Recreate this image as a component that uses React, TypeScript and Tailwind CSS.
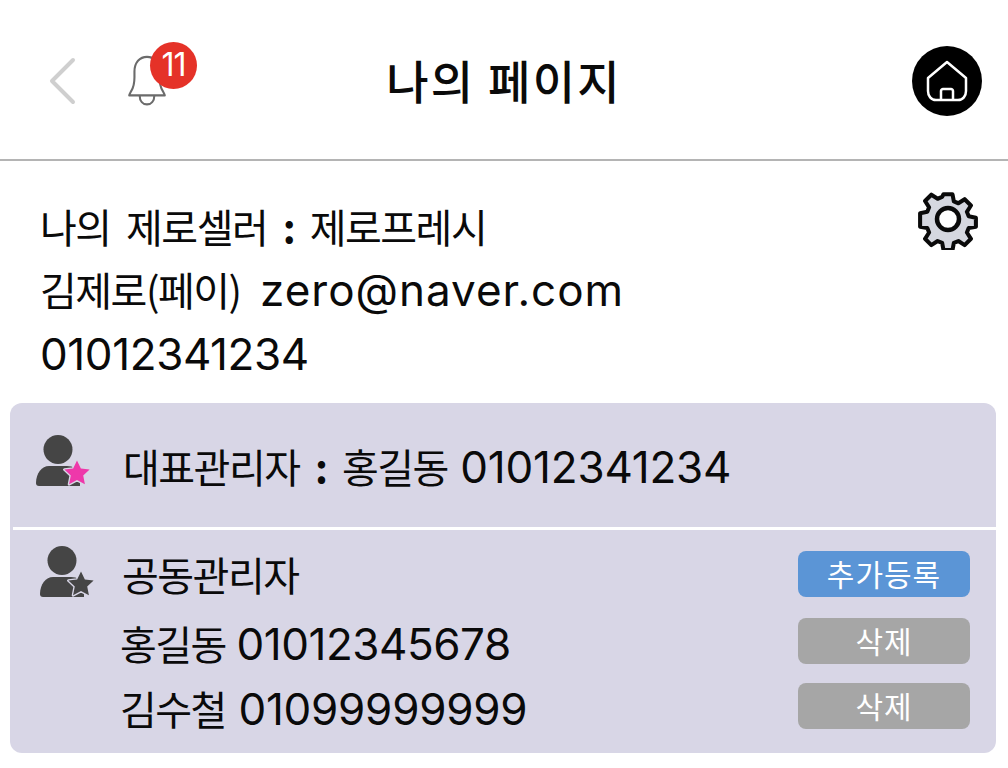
import React from 'react';

const FONT = "font-['Noto_Sans_CJK_KR',sans-serif]";

// latin and digits run larger than the hangul in the picture
const Num: React.FC<{ className?: string; children: React.ReactNode }> = ({ className, children }) => (
  <span className={`font-['Inter',sans-serif] text-[44px] font-normal [word-spacing:0] ${className || 'tracking-[-0.400px]'}`}>{children}</span>
);

const Colon = () => <span className="font-bold">:</span>;

const Bell = () => (
  <svg width="46" height="59" viewBox="0 0 44 52" preserveAspectRatio="none" fill="none" stroke="#6b6b6b" strokeWidth="2" strokeLinejoin="round" aria-hidden="true">
    <path d="M5 40c0-1 1-2 2-4 2-3 3-6 3-12V19C10 11 15 6 22 6s12 5 12 13v5c0 6 1 9 3 12 1 2 2 3 2 4z" />
    <path d="M15 40c0 5 3 8 7 8s7-3 7-8" />
  </svg>
);

const Gear = () => (
  <svg width="62" height="62" viewBox="0 0 62 62" aria-hidden="true">
    <path
      d="M26 3h10l1.500 8 5 2 7-4.500 7 7-4.500 7 2 5 8 1.500v10l-8 1.500-2 5 4.500 7-7 7-7-4.500-5 2-1.500 8H26l-1.500-8-5-2-7 4.500-7-7 4.500-7-2-5-8-1.500V24l8-1.500 2-5L5.500 10.500l7-7 7 4.500 5-2z"
      transform="translate(31 31) scale(0.9) translate(-31 -30.500)"
      fill="#d5d7df"
      stroke="#0a0a0a"
      strokeWidth="4.500"
      strokeLinejoin="round"
    />
    <circle cx="31" cy="31" r="11" fill="#fff" stroke="#0a0a0a" strokeWidth="4.500" />
  </svg>
);

const AdminIcon: React.FC<{ star: string }> = ({ star }) => (
  <svg width="54" height="54" viewBox="0 0 54 54" aria-hidden="true">
    <circle cx="22" cy="14.500" r="14.500" fill="#454545" />
    <path d="M3 51c-2 0-3-1-3-3 0-10 6-17 13-17h18c6 0 11 3 13 9v11z" fill="#454545" />
    <path
      d="M41 24l4.300 9 9.700 1.200-7.100 6.700 1.900 9.600-8.800-4.700-8.800 4.700 1.900-9.600-7.100-6.700 9.700-1.200z"
      transform="translate(41 38) scale(0.9) translate(-41 -38)"
      fill={star}
      stroke="#d8d6e6"
      strokeWidth="3"
      strokeLinejoin="round"
      paintOrder="stroke"
    />
  </svg>
);

const Tag: React.FC<{ color: string; children: React.ReactNode }> = ({ color, children }) => (
  <button className={`w-[172px] h-[46px] rounded-lg flex items-center justify-center text-white text-[30px] font-normal tracking-[1px] pb-[2px] ${color}`}>
    {children}
  </button>
);

export default function App() {
  return (
    <div className={`w-[1008px] h-[768px] bg-white text-[#0a0a0a] overflow-hidden ${FONT}`}>
      <header className="relative h-[161px] border-b-2 border-[#b4b4b4] flex items-center pl-[48px] pr-[26px] pt-[3px]">
        <svg width="30" height="48" viewBox="0 0 30 48" fill="none" stroke="#cfcfcf" strokeWidth="4" strokeLinecap="round" strokeLinejoin="round" aria-hidden="true">
          <path d="M25 3L4 24l21 21" />
        </svg>
        <div className="relative ml-[46px] mt-[-3px]">
          <Bell />
          <span className="absolute left-[26px] top-[-8px] w-[47px] h-[47px] rounded-full bg-[#e53228] text-white text-[32px] leading-[45px] text-center font-['Inter',sans-serif] tracking-[-1px]">11</span>
        </div>
        <h1 className="flex-1 text-center text-[46px] font-medium tracking-[2.300px] pr-[74px] pb-[4px]">나의 페이지</h1>
        <div className="w-[70px] h-[70px] rounded-full bg-black flex items-center justify-center">
          <svg width="44" height="44" viewBox="0 0 44 44" fill="none" stroke="#fff" strokeWidth="2.500" strokeLinejoin="round" aria-hidden="true">
            <path d="M22 3L3 19v13c0 5 3 9 8 9h22c5 0 8-4 8-9V19z" />
            <path d="M16 41V32c0-1 1-2 2-2h8c1 0 2 1 2 2v9" />
          </svg>
        </div>
      </header>

      <section className="relative h-[242px] pl-[40px] pt-[34px] text-[40px] leading-[63px] font-normal tracking-[-1.500px]">
        <p className="[word-spacing:8px]">나의 제로셀러 <Colon /> 제로프레시</p>
        <p>김제로(페이) <Num className="ml-[12px] tracking-[1px]">zero@naver.com</Num></p>
        <p><Num>01012341234</Num></p>
        <div className="absolute right-[29px] top-[27px]">
          <Gear />
        </div>
      </section>

      <section className="mx-[10px] w-[986px] h-[350px] rounded-xl bg-[#d8d6e6]">
        <div className="h-[124px] pl-[26px] flex items-center gap-[33px] text-[40px] font-normal tracking-[-1.500px]">
          <div className="mb-[6px]">
            <AdminIcon star="#ee38aa" />
          </div>
          <span className="pt-[4px] [word-spacing:8px]">대표관리자 <Colon /> 홍길동 <Num className="ml-[-3px] tracking-[-0.200px]">01012341234</Num></span>
        </div>
        <div className="ml-[3px] h-[3px] bg-white" />
        <div className="pl-[30px] pr-[26px] pt-[21px] text-[40px] font-normal tracking-[-1.500px]">
          <div className="flex items-center h-[46px]">
            <div className="mt-[-2px]">
              <AdminIcon star="#454545" />
            </div>
            <span className="ml-[28px] flex-1">공동관리자</span>
            <Tag color="bg-[#5b95d6]">추가등록</Tag>
          </div>
          <div className="flex items-center h-[46px] mt-[21px] pl-[80px]">
            <span className="flex-1 pt-[6px]">홍길동 <Num className="ml-[3px] tracking-[-0.450px]">01012345678</Num></span>
            <Tag color="bg-[#a6a6a6]">삭제</Tag>
          </div>
          <div className="flex items-center h-[46px] mt-[19px] pl-[80px]">
            <span className="flex-1 pt-[5px]">김수철 <Num className="ml-[5px] tracking-[-0.250px]">01099999999</Num></span>
            <Tag color="bg-[#a6a6a6]">삭제</Tag>
          </div>
        </div>
      </section>
    </div>
  );
}
